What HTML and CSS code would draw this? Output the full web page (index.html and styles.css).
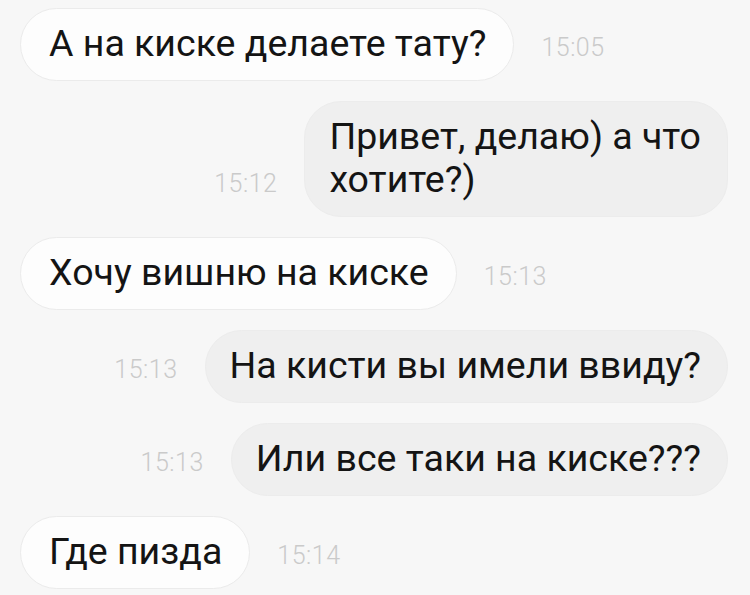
FILE: index.html
```html
<!DOCTYPE html>
<html lang="ru">
<head>
<meta charset="utf-8">
<title>Чат</title>
<link rel="stylesheet" href="styles.css">
</head>
<body>
<div class="chat">
  <div class="row in">
    <div class="bubble">А на киске делаете тату?</div>
    <div class="time">15:05</div>
  </div>
  <div class="row out">
    <div class="time">15:12</div>
    <div class="bubble">Привет, делаю) а что<br>хотите?)</div>
  </div>
  <div class="row in">
    <div class="bubble">Хочу вишню на киске</div>
    <div class="time">15:13</div>
  </div>
  <div class="row out">
    <div class="time">15:13</div>
    <div class="bubble">На кисти вы имели ввиду?</div>
  </div>
  <div class="row out">
    <div class="time">15:13</div>
    <div class="bubble">Или все таки на киске???</div>
  </div>
  <div class="row in">
    <div class="bubble">Где пизда</div>
    <div class="time">15:14</div>
  </div>
</div>
</body>
</html>
```
FILE: styles.css
```css
html, body {
  margin: 0;
  padding: 0;
}
body {
  width: 750px;
  height: 595px;
  overflow: hidden;
  background: #f7f7f7;
  font-family: Roboto, "Liberation Sans", sans-serif;
}
.chat {
  display: flex;
  flex-direction: column;
  gap: 20px;
  padding: 8px 22px 0 20px;
}
.row {
  display: flex;
  align-items: last baseline;
  gap: 27px;
}
.row.out {
  justify-content: flex-end;
}
.bubble {
  font-size: 37.5px;
  line-height: 43px;
  color: #141414;
  border-radius: 37px;
}
.in .bubble {
  padding: 13px 27px 15px 28px;
  background: #fdfdfd;
  border: 1px solid #ebebeb;
}
.out .bubble {
  padding: 13px 26px 15px 24px;
  background: #efefef;
  border: 1px solid #ececec;
}
.time {
  font-size: 25px;
  font-weight: 300;
  letter-spacing: 0.5px;
  color: #cacaca;
}
```
